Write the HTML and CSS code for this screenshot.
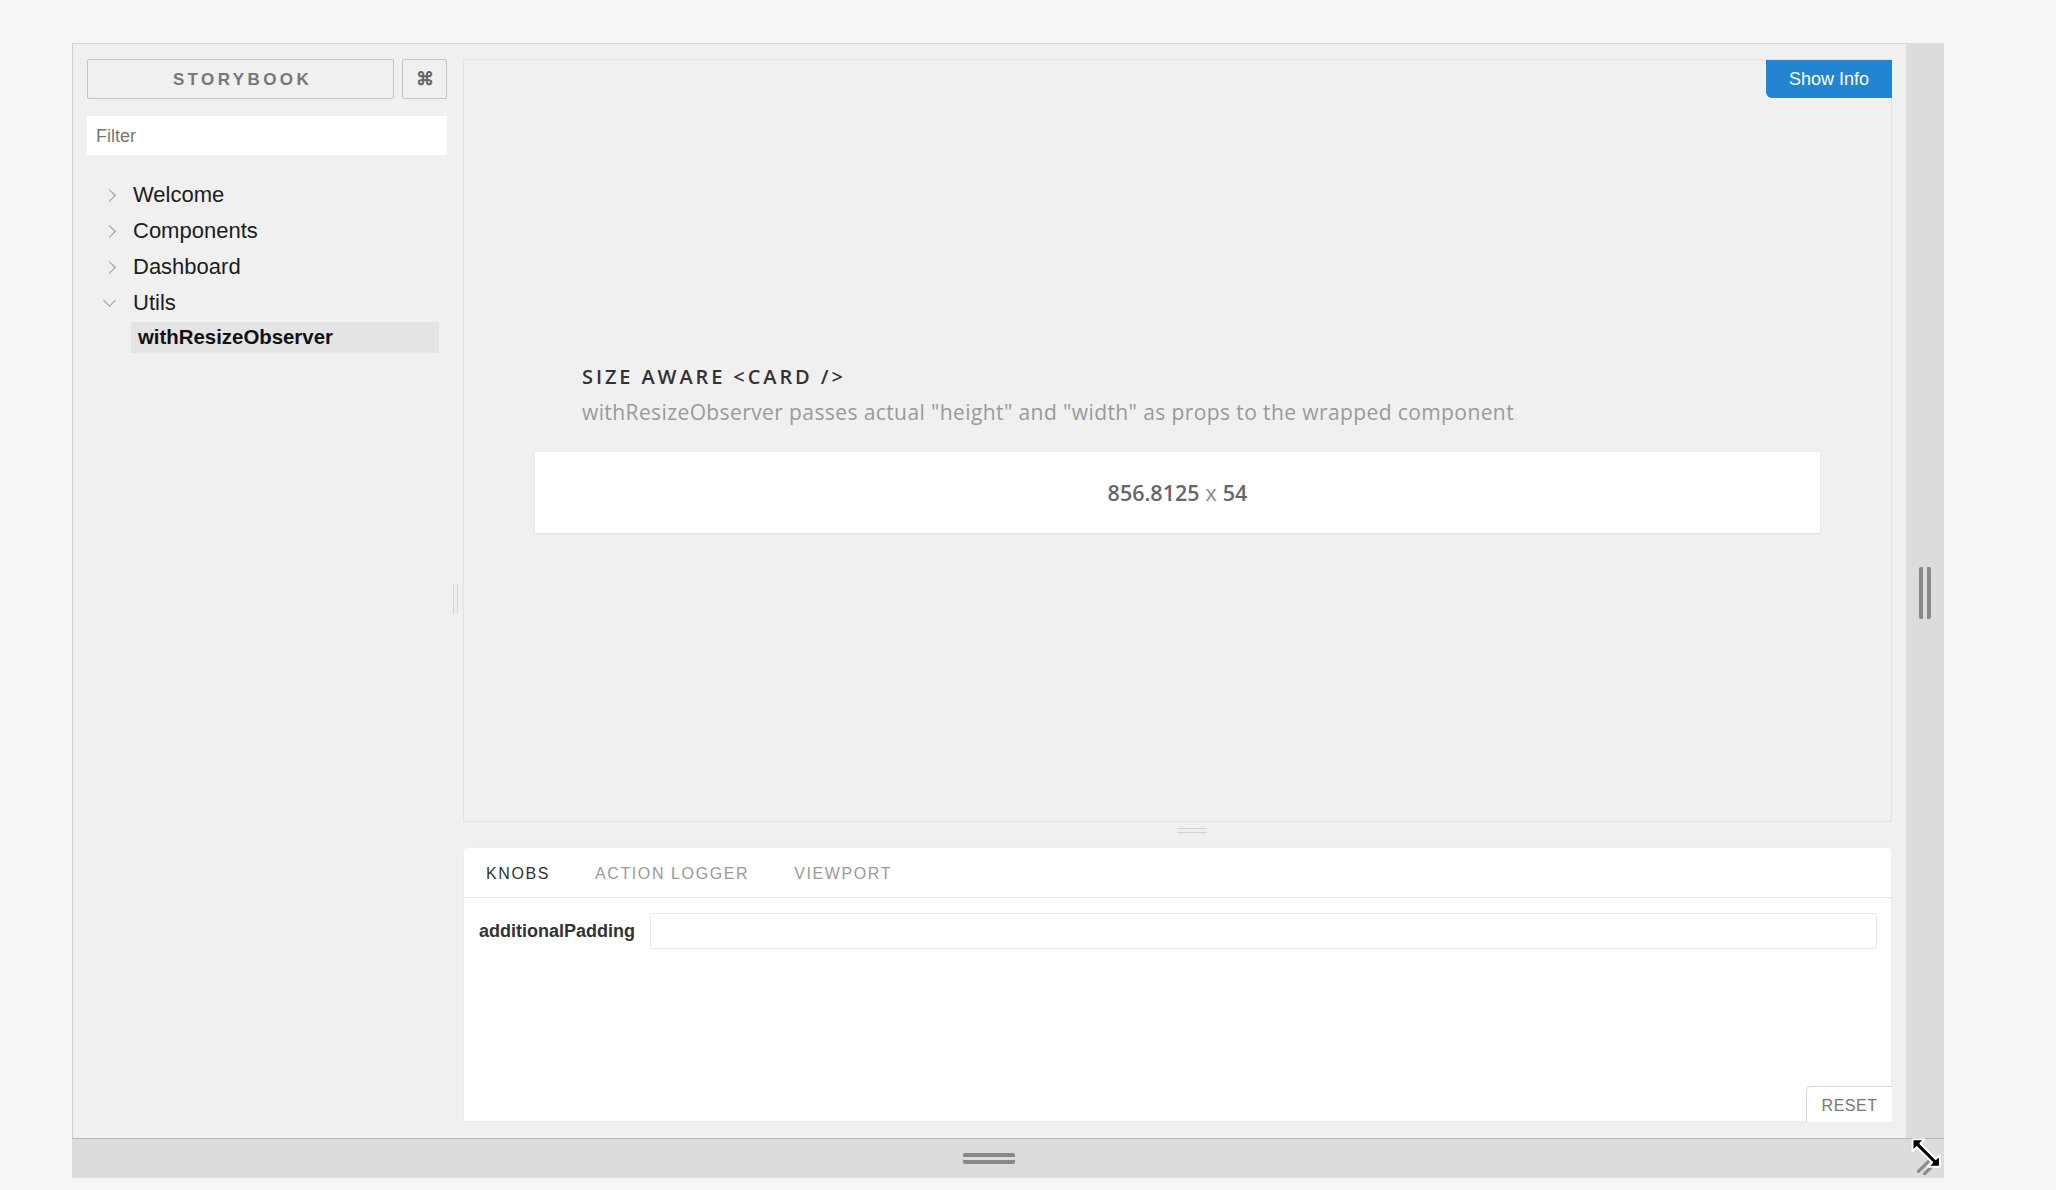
FILE: index.html
```html
<!DOCTYPE html>
<html lang="en">
<head>
  <meta charset="UTF-8" />
  <meta name="viewport" content="width=device-width, initial-scale=1" />
  <title>Storybook — withResizeObserver</title>
  <link rel="stylesheet" href="styles.css">
</head>
<body>
  <div class="stage">
    <div class="resizer">

      <div class="frame">
        <aside class="sidebar">
          <div class="brand-row">
            <button class="brand">STORYBOOK</button>
            <button class="shortcuts">⌘</button>
          </div>
          <input class="filter" type="text" placeholder="Filter" />

          <ul class="tree">
            <li class="tree-item"><span class="chevron"></span>Welcome</li>
            <li class="tree-item"><span class="chevron"></span>Components</li>
            <li class="tree-item"><span class="chevron"></span>Dashboard</li>
            <li class="tree-item open"><span class="chevron"></span>Utils</li>
            <li class="story selected">withResizeObserver</li>
          </ul>
        </aside>

        <div class="split-v"><span class="grip-v"></span></div>

        <main class="main">
          <section class="preview">
            <button class="show-info">Show Info</button>
            <div class="story-wrap">
              <div class="story-head">
                <h2 class="story-title">SIZE AWARE &lt;CARD /&gt;</h2>
                <p class="story-desc">withResizeObserver passes actual "height" and "width" as props to the wrapped component</p>
              </div>
              <div class="card">
                <span class="dim">856.8125</span><span class="times">x</span><span class="dim">54</span>
              </div>
            </div>
          </section>

          <div class="split-h"><span class="grip-h"></span></div>

          <section class="panel">
            <nav class="tabs">
              <span class="tab active">KNOBS</span>
              <span class="tab">ACTION LOGGER</span>
              <span class="tab">VIEWPORT</span>
            </nav>
            <div class="knobs">
              <label class="knob-label" for="padding">additionalPadding</label>
              <input class="knob-input" id="padding" type="text" />
            </div>
            <div class="panel-foot">
              <button class="reset">RESET</button>
            </div>
          </section>
        </main>
      </div>

      <div class="bar-right"><span class="bar-grip-v"></span></div>
      <div class="bar-bottom"><span class="bar-grip-h"></span></div>
      <div class="bar-corner">
        <svg class="cursor" width="36" height="38" viewBox="0 0 30 32">
          <path d="M7 29 L16 20 M12 31 L20 23" stroke="#8a8a8a" stroke-width="2.6" stroke-linecap="round" />
          <path d="M2 2 L12 2 L8.5 5.5 L21.5 18.5 L25 15 L25 25 L15 25 L18.5 21.5 L5.5 8.5 L2 12 Z" fill="#000" stroke="#fff" stroke-width="1.6" stroke-linejoin="round" />
        </svg>
      </div>

    </div>
  </div>
</body>
</html>
```

FILE: styles.css
```css
:root {
  --page-bg: #f6f6f6;
  --frame-bg: #f0f0f0;
  --bar-bg: #dcdcdc;
  --line: #e2e2e2;
  --text: #222;
  --muted: #999;
  --blue: #2385d2;
  --font: 'Liberation Sans', Arial, sans-serif;
}

* { box-sizing: border-box; }

body {
  margin: 0;
  background-color: var(--page-bg);
  font-family: var(--font);
  color: var(--text);
}

button, input {
  font-family: inherit;
}

.stage {
  padding: 43px 0 0 72px;
}

.resizer {
  display: grid;
  grid-template-columns: 1834px 38px;
  grid-template-rows: 1095px 40px;
}

/* storybook frame */
.frame {
  display: flex;
  background-color: var(--frame-bg);
  border-top: 1px solid #d2d2d2;
  border-left: 1px solid #d2d2d2;
  padding: 15px 14px 16px 14px;
}

.sidebar {
  width: 360px;
  flex: none;
}

.brand-row {
  display: flex;
  gap: 8px;
}

.brand {
  flex: 1;
  height: 40px;
  background: transparent;
  border: 1px solid #c6c6c6;
  border-radius: 2px;
  color: #777;
  font-size: 17px;
  font-weight: 700;
  letter-spacing: 3.4px;
  padding: 2px 0 0 4px;
}

.shortcuts {
  width: 45px;
  height: 40px;
  background: transparent;
  border: 1px solid #c6c6c6;
  border-radius: 2px;
  color: #666;
  font-size: 18px;
  font-weight: 700;
  padding: 0;
}

.filter {
  display: block;
  width: 100%;
  height: 39px;
  margin-top: 17px;
  border: none;
  background: #fff;
  padding: 2px 9px 0;
  font-size: 18px;
  color: #333;
}

.filter::placeholder {
  color: #777;
}

.tree {
  list-style: none;
  margin: 22px 0 0;
  padding: 0;
}

.tree-item {
  display: flex;
  align-items: center;
  height: 36px;
  font-size: 22px;
  color: #1c1c1c;
}

.chevron {
  width: 9px;
  height: 9px;
  border-right: 1.5px solid #999;
  border-bottom: 1.5px solid #999;
  transform: rotate(-45deg);
  margin: 0 19px 0 18px;
}

.tree-item.open .chevron {
  transform: rotate(45deg);
  margin-top: -6px;
}

.story {
  margin: 1px 8px 0 44px;
  height: 31px;
  line-height: 31px;
  padding-left: 7px;
  font-size: 20.4px;
}

.story.selected {
  background-color: #e4e4e4;
  font-weight: 700;
  color: #111;
}

/* vertical splitter between sidebar and preview */
.split-v {
  width: 16px;
  flex: none;
  display: flex;
  align-items: center;
  justify-content: center;
}

.grip-v {
  width: 5px;
  height: 29px;
  margin-top: 18px;
  border-left: 1px solid #d4d4d4;
  border-right: 1px solid #d4d4d4;
}

.main {
  flex: 1;
  display: flex;
  flex-direction: column;
  min-width: 0;
}

.preview {
  position: relative;
  height: 763px;
  flex: none;
  border: 1px solid var(--line);
  background-color: #f0f0f0;
  display: flex;
  flex-direction: column;
  justify-content: center;
}

.show-info {
  position: absolute;
  top: 0;
  right: -1px;
  width: 126px;
  height: 38px;
  border: none;
  border-radius: 0 0 0 6px;
  background-color: var(--blue);
  color: #fff;
  font-size: 18px;
}

.story-wrap {
  padding: 0 71px;
  margin-top: 14px;
}

.story-head {
  padding-left: 47px;
}

.story-title {
  margin: 0;
  font-family: 'Open Sans', var(--font);
  font-size: 20px;
  font-weight: 600;
  letter-spacing: 2.9px;
  color: #333;
}

.story-desc {
  margin: 8px 0 0;
  font-family: 'Open Sans', var(--font);
  font-size: 21px;
  letter-spacing: 0.4px;
  color: #9a9a9a;
}

.card {
  margin-top: 26px;
  height: 81px;
  background: #fff;
  box-shadow: 0 1px 2px rgba(0, 0, 0, 0.08);
  display: flex;
  align-items: center;
  justify-content: center;
  gap: 6px;
  font-family: 'Open Sans', var(--font);
  font-size: 21.5px;
  color: #666;
}

.dim {
  font-weight: 600;
}

.times {
  color: #888;
}

/* horizontal splitter */
.split-h {
  height: 25px;
  flex: none;
  display: flex;
  justify-content: center;
  padding-left: 28px;
}

.grip-h {
  width: 30px;
  height: 5px;
  margin-top: 6px;
  border-top: 1px solid #d4d4d4;
  border-bottom: 1px solid #d4d4d4;
}

/* addons panel */
.panel {
  flex: 1;
  background: #fff;
  border-radius: 4px;
  border: 1px solid #ececec;
  display: flex;
  flex-direction: column;
}

.tabs {
  display: flex;
  height: 50px;
  align-items: center;
  padding-top: 2px;
  border-bottom: 1px solid #e6e6e6;
}

.tab {
  padding: 0 23px 0 22px;
  font-size: 16px;
  letter-spacing: 1.6px;
  color: #9a9a9a;
}

.tab.active {
  color: #333;
}

.knobs {
  display: flex;
  align-items: center;
  gap: 14px;
  padding: 15px 14px 0 15px;
}

.knob-label {
  width: 157px;
  flex: none;
  font-size: 18px;
  font-weight: 700;
  color: #333;
  white-space: nowrap;
}

.knob-input {
  flex: 1;
  height: 36px;
  border: 1px solid #e8e8e8;
  border-radius: 2px;
  background: #fff;
}

.panel-foot {
  margin-top: auto;
  display: flex;
  justify-content: flex-end;
}

.reset {
  width: 86px;
  height: 36px;
  margin-right: -1px;
  margin-bottom: -1px;
  padding-top: 3px;
  border: 1px solid #d8d8d8;
  border-right: none;
  border-bottom: none;
  border-radius: 5px 0 0 0;
  background: #fff;
  color: #777;
  font-size: 16px;
  letter-spacing: 0.5px;
}

/* outer resize bars */
.bar-right {
  background-color: var(--bar-bg);
  display: flex;
  align-items: center;
  justify-content: center;
}

.bar-grip-v {
  width: 12px;
  height: 52px;
  margin-top: 4px;
  border-left: 4px solid #888;
  border-right: 4px solid #888;
  border-radius: 2px;
}

.bar-bottom {
  background-color: var(--bar-bg);
  border-top: 1px solid #b9b9b9;
  display: flex;
  align-items: center;
  justify-content: center;
}

.bar-grip-h {
  width: 52px;
  height: 11px;
  border-top: 4px solid #888;
  border-bottom: 4px solid #888;
  border-radius: 2px;
}

.bar-corner {
  position: relative;
  background-color: var(--bar-bg);
  border-top: 1px solid #b9b9b9;
}

.cursor {
  position: absolute;
  left: 4px;
  top: -2px;
}
```
